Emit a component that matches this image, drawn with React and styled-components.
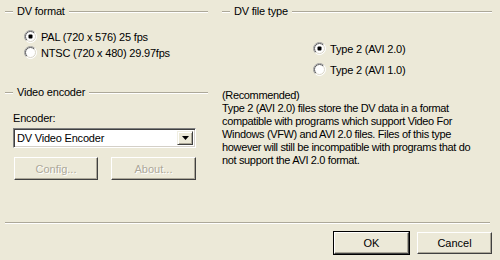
import styled, { createGlobalStyle } from 'styled-components';

const GlobalStyle = createGlobalStyle`
  html, body {
    margin: 0;
    background: #ECE9D8;
  }
  body {
    font-family: "Liberation Sans", Arial, sans-serif;
    font-size: 11px;
    letter-spacing: -0.2px;
    color: #000;
  }
`;

function Radio({ checked }) {
  return (
    <RadioIcon width="13" height="13" viewBox="0 0 13 13">
      <defs>
        <linearGradient id="outer" x1="0" y1="0" x2="1" y2="1">
          <stop offset="0.45" stopColor="#9D9D9D" />
          <stop offset="0.55" stopColor="#FFFFFF" />
        </linearGradient>
        <linearGradient id="inner" x1="0" y1="0" x2="1" y2="1">
          <stop offset="0.45" stopColor="#5A5A5A" />
          <stop offset="0.55" stopColor="#D8D4C6" />
        </linearGradient>
      </defs>
      <circle cx="6.5" cy="6.5" r="6" fill="#fff" stroke="url(#outer)" strokeWidth="1" />
      <circle cx="6.5" cy="6.5" r="5" fill="none" stroke="url(#inner)" strokeWidth="1" />
      {checked && <rect x="4.5" y="4.5" width="4" height="4" rx="1" fill="#000" />}
    </RadioIcon>
  );
}

export default function App() {
  return (
    <Dialog>
      <GlobalStyle />

      <Panels>
        <Column>
          <Group>
            <GroupTitle>DV format</GroupTitle>
            <RadioList $indent={19} $top={12} $gap={3}>
              <RadioRow><Radio checked />PAL (720 x 576) 25 fps</RadioRow>
              <RadioRow><Radio />NTSC (720 x 480) 29.97fps</RadioRow>
            </RadioList>
          </Group>

          <Group $top={27}>
            <GroupTitle>Video encoder</GroupTitle>
            <EncoderBody>
              <span>Encoder:</span>
              <Combo>
                <ComboValue>DV Video Encoder</ComboValue>
                <ComboArrow>
                  <svg width="7" height="4" viewBox="0 0 7 4">
                    <path d="M0 0h7L3.5 4z" fill="#000" />
                  </svg>
                </ComboArrow>
              </Combo>
              <ButtonPair>
                <Button disabled $width={84}>Config...</Button>
                <Button disabled $width={85}>About...</Button>
              </ButtonPair>
            </EncoderBody>
          </Group>
        </Column>

        <Column>
          <Group>
            <GroupTitle>DV file type</GroupTitle>
            <RadioList $indent={91} $top={24} $gap={8}>
              <RadioRow><Radio checked />Type 2 (AVI 2.0)</RadioRow>
              <RadioRow><Radio />Type 2 (AVI 1.0)</RadioRow>
            </RadioList>
          </Group>
          <Description>
            (Recommended)<br />
            Type 2 (AVI 2.0) files store the DV data in a format<br />
            compatible with programs which support Video For<br />
            Windows (VFW) and AVI 2.0 files. Files of this type<br />
            however will still be incompatible with programs that do<br />
            not support the AVI 2.0 format.
          </Description>
        </Column>
      </Panels>

      <Separator />

      <Footer>
        <Button $default $width={75}>OK</Button>
        <Button $width={75}>Cancel</Button>
      </Footer>
    </Dialog>
  );
}

const Dialog = styled.div`
  width: 500px;
  height: 260px;
  box-sizing: border-box;
  display: flex;
  flex-direction: column;
  padding: 5px 8px 6px 5px;
`;

const Panels = styled.div`
  flex: 1;
  display: grid;
  grid-template-columns: 203px 1fr;
  column-gap: 14px;
`;

const Column = styled.div`
  display: flex;
  flex-direction: column;
`;

const Group = styled.section`
  margin-top: ${(p) => p.$top || 0}px;
`;

const GroupTitle = styled.div`
  display: flex;
  align-items: center;
  gap: 4px;
  height: 13px;
  line-height: 13px;

  &::before,
  &::after {
    content: '';
    height: 0;
    border-top: 1px solid #ACA899;
    border-bottom: 1px solid #FFFFFF;
  }

  &::before {
    width: 8px;
  }

  &::after {
    flex: 1;
  }
`;

const RadioList = styled.div`
  display: flex;
  flex-direction: column;
  gap: ${(p) => p.$gap}px;
  padding: ${(p) => p.$top}px 0 0 ${(p) => p.$indent}px;
`;

const RadioRow = styled.label`
  display: flex;
  align-items: center;
  gap: 4px;
  height: 13px;
  white-space: nowrap;
`;

const RadioIcon = styled.svg`
  flex: none;
`;

const EncoderBody = styled.div`
  display: flex;
  flex-direction: column;
  padding: 13px 0 0 8px;

  & > span {
    line-height: 13px;
  }
`;

const Combo = styled.div`
  display: flex;
  align-items: stretch;
  width: 183px;
  height: 20px;
  margin-top: 3px;
  box-sizing: border-box;
  background: #FFFFFF;
  border: 1px solid;
  border-color: #808080 #FFFFFF #FFFFFF #808080;
  box-shadow: inset 1px 1px 0 #404040, inset -1px -1px 0 #D4D0C8;
  padding: 2px;
`;

const ComboValue = styled.div`
  flex: 1;
  display: flex;
  align-items: center;
  padding-left: 1px;
`;

const ComboArrow = styled.div`
  width: 16px;
  display: flex;
  align-items: center;
  justify-content: center;
  box-sizing: border-box;
  background: #ECE9D8;
  border: 1px solid;
  border-color: #F1EFE2 #404040 #404040 #F1EFE2;
  box-shadow: inset 1px 1px 0 #FFFFFF, inset -1px -1px 0 #ACA899;
`;

const ButtonPair = styled.div`
  display: flex;
  gap: 13px;
  margin-top: 9px;
  margin-left: 1px;
`;

const Button = styled.button`
  flex: none;
  width: ${(p) => p.$width}px;
  height: ${(p) => (p.$default ? 22 : 23)}px;
  box-sizing: border-box;
  padding: 0;
  font: inherit;
  font-size: 11px;
  background: #ECE9D8;
  color: #000;
  border: 1px solid;
  border-color: #FFFFFF #404040 #404040 #FFFFFF;
  box-shadow: inset -1px -1px 0 #ACA899;
  outline: ${(p) => (p.$default ? '1px solid #000' : 'none')};
  outline-offset: 0;

  &:disabled {
    color: #ACA899;
    text-shadow: 1px 1px 0 #FFFFFF;
  }
`;

const Description = styled.p`
  margin: 13px 0 0;
  line-height: 13px;
  letter-spacing: -0.35px;
  white-space: nowrap;
`;

const Separator = styled.hr`
  margin: 0 2px 8px 0;
  height: 0;
  border: 0;
  border-top: 1px solid #ACA899;
  border-bottom: 1px solid #FFFFFF;
`;

const Footer = styled.div`
  display: flex;
  justify-content: flex-end;
  gap: 8px;

  & > button {
    height: 22px;
  }
`;
